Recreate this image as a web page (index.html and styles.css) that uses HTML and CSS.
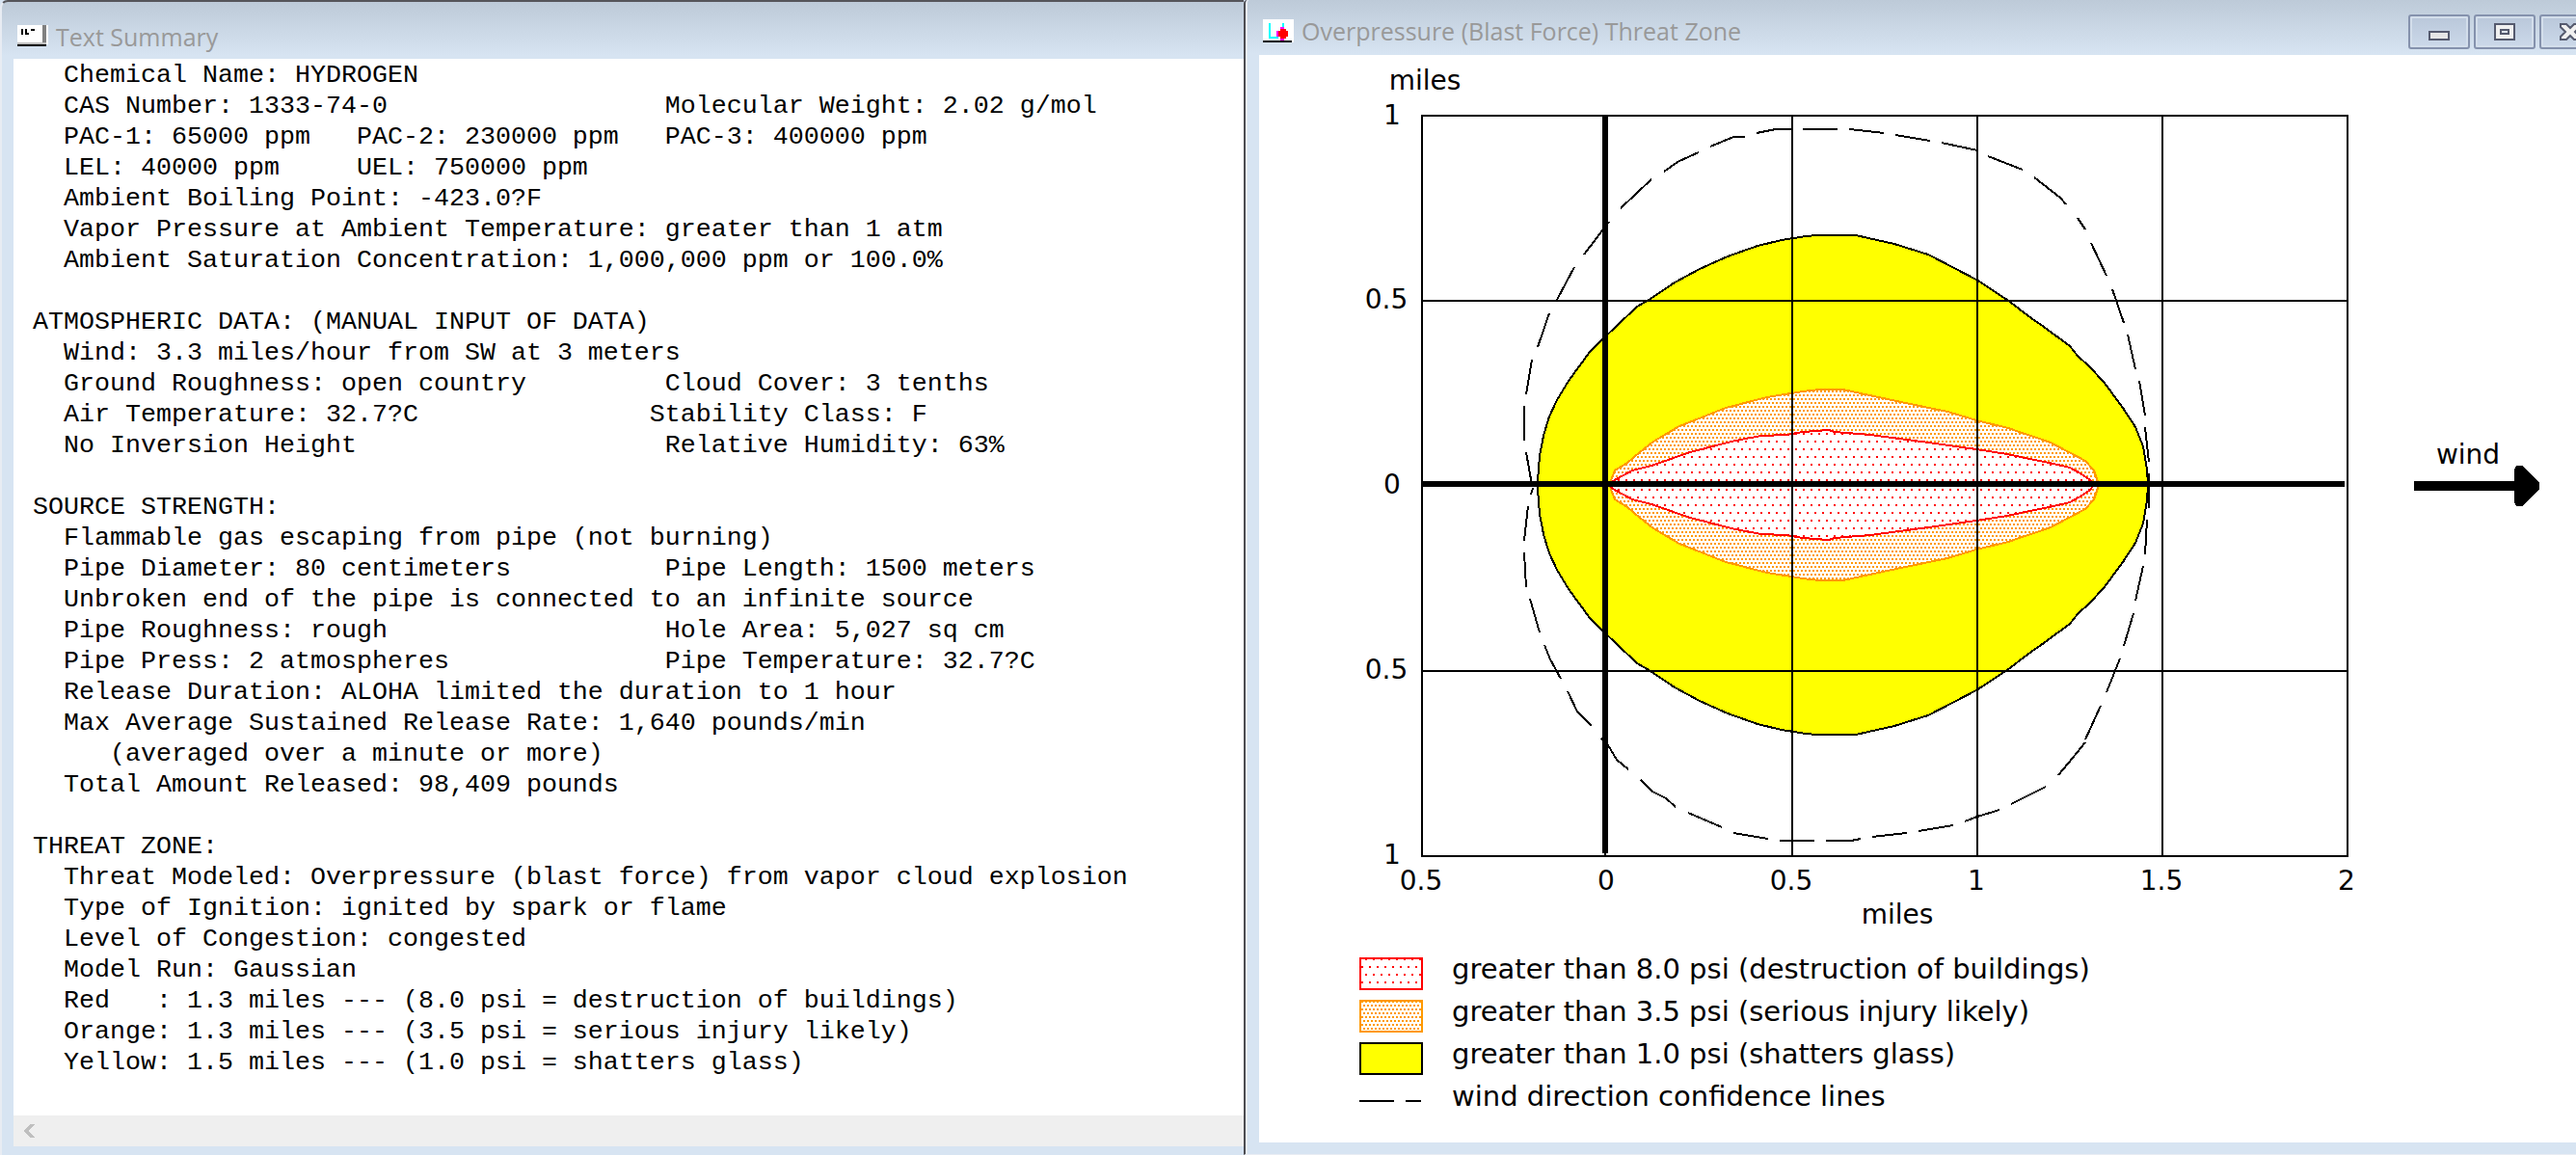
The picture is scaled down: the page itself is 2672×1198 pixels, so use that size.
FILE: index.html
```html
<!DOCTYPE html>
<html lang="en">
<head>
<meta charset="utf-8">
<title>ALOHA</title>
<link rel="stylesheet" href="styles.css">
</head>
<body>
<main class="desktop">
  <section class="window window-text">
    <header class="titlebar">
      <svg class="title-icon" viewBox="0 0 32 24" aria-hidden="true" shape-rendering="crispEdges">
        <path d="M0 0H32V20H0z" fill="#fff"/>
        <path d="M26 0H30V20H26z" fill="#808080"/>
        <path d="M0 18H30V20H0z" fill="#c0c0c0"/>
        <path d="M0 20H30V22H0z" fill="#000"/>
        <path d="M4 4h2v6h-2zM8 4h2v6h-2zM10 8h2v2h-2zM14 4h4v2h-4z" fill="#000"/>
      </svg>
      <h1 class="title">Text Summary</h1>
    </header>
    <div class="client">
<pre class="summary">  Chemical Name: HYDROGEN
  CAS Number: 1333-74-0                  Molecular Weight: 2.02 g/mol
  PAC-1: 65000 ppm   PAC-2: 230000 ppm   PAC-3: 400000 ppm
  LEL: 40000 ppm     UEL: 750000 ppm
  Ambient Boiling Point: -423.0?F
  Vapor Pressure at Ambient Temperature: greater than 1 atm
  Ambient Saturation Concentration: 1,000,000 ppm or 100.0%

ATMOSPHERIC DATA: (MANUAL INPUT OF DATA)
  Wind: 3.3 miles/hour from SW at 3 meters
  Ground Roughness: open country         Cloud Cover: 3 tenths
  Air Temperature: 32.7?C               Stability Class: F
  No Inversion Height                    Relative Humidity: 63%

SOURCE STRENGTH:
  Flammable gas escaping from pipe (not burning)
  Pipe Diameter: 80 centimeters          Pipe Length: 1500 meters
  Unbroken end of the pipe is connected to an infinite source
  Pipe Roughness: rough                  Hole Area: 5,027 sq cm
  Pipe Press: 2 atmospheres              Pipe Temperature: 32.7?C
  Release Duration: ALOHA limited the duration to 1 hour
  Max Average Sustained Release Rate: 1,640 pounds/min
     (averaged over a minute or more)
  Total Amount Released: 98,409 pounds

THREAT ZONE:
  Threat Modeled: Overpressure (blast force) from vapor cloud explosion
  Type of Ignition: ignited by spark or flame
  Level of Congestion: congested
  Model Run: Gaussian
  Red   : 1.3 miles --- (8.0 psi = destruction of buildings)
  Orange: 1.3 miles --- (3.5 psi = serious injury likely)
  Yellow: 1.5 miles --- (1.0 psi = shatters glass)</pre>
      <div class="scrollbar">
        <button class="scroll-left" type="button" aria-label="Scroll left">
          <svg viewBox="0 0 12 14" width="12" height="14" aria-hidden="true"><path d="M12 0H7L0 7l7 7h5L6 7z" fill="#bfbfbf" shape-rendering="crispEdges"/></svg>
        </button>
      </div>
    </div>
  </section>

  <section class="window window-zone">
    <header class="titlebar">
      <svg class="title-icon" viewBox="0 0 32 24" aria-hidden="true" shape-rendering="crispEdges">
        <path d="M0 0H32V24H0z" fill="#fff"/>
        <path d="M0 22H30V24H0z" fill="#000"/>
        <path d="M6 4h2v14h8v2H6zM20 4h2v6h-2z" fill="#0ff"/>
        <path d="M18 8h4v14h-4zM14 12h4v6h-4z" fill="#f0f"/>
        <path d="M18 10h6v2h2v6h-2v2h-6v-2h-2v-6h2z" fill="#f00"/>
      </svg>
      <h1 class="title">Overpressure (Blast Force) Threat Zone</h1>
      <div class="controls">
        <button class="control" type="button" aria-label="Minimize">
          <svg viewBox="0 0 22 18" width="22" height="18" aria-hidden="true"><path d="M1 9h20v8H1z" fill="#e6e6e6" stroke="#555a6e" stroke-width="2"/></svg>
        </button>
        <button class="control" type="button" aria-label="Maximize">
          <svg viewBox="0 0 22 18" width="22" height="18" aria-hidden="true"><path d="M1 1h20v16H1z" fill="#f0f0f0" stroke="#555a6e" stroke-width="2"/><path d="M7 7h8v4H7z" fill="#dde5ef" stroke="#555a6e" stroke-width="2"/></svg>
        </button>
        <button class="control" type="button" aria-label="Close">
          <svg viewBox="0 0 22 18" width="22" height="18" aria-hidden="true"><path d="M1 1h6l4 4 4-4h6v3l-5 5 5 5v3h-6l-4-4-4 4H1v-3l5-5-5-5z" fill="#f0f0f0" stroke="#555a6e" stroke-width="2"/></svg>
        </button>
      </div>
    </header>
    <div class="client">
      <svg class="chart" viewBox="1306 57 1366 920" role="img" aria-label="Overpressure threat zone in miles">
        <defs>
          <pattern id="dots-red" x="1866" y="457" width="8" height="16" patternUnits="userSpaceOnUse">
            <path d="M0 0h8v16H0z" fill="#fff"/><path d="M0 0h2v2H0zM4 8h2v2H4z" fill="#f00"/>
          </pattern>
          <pattern id="dots-orange" x="1866" y="457" width="4" height="8" patternUnits="userSpaceOnUse">
            <path d="M0 0h4v8H0z" fill="#fff"/><path d="M0 0h2v2H0zM2 4h2v2H2z" fill="#ff9900"/>
          </pattern>
          <path id="yellow-half" d="M1595 503L1595 499 1597 473 1601 452 1607 432 1615 415 1627 395 1638 380 1649 365 1662 352 1677 338 1698 318 1712 310 1737 293 1763 279 1792 266 1823 255 1848 249 1873 245 1885 244 1925 244 1938 247 1965 253 2000 264 2027 278 2050 290 2082 311 2107 330 2120 339 2147 359 2155 369 2167 380 2182 396 2202 423 2215 443 2223 463 2227 487 2228 503"/>
          <path id="orange-half" d="M1670 503L1671 498 1675 488 1688 480 1701 469 1715 458 1742 442 1765 433 1790 423 1833 412 1870 406 1887 404 1912 404 1930 408 1967 416 2020 427 2050 436 2083 444 2127 459 2163 478 2172 488 2177 503"/>
          <path id="red-half" d="M1668 503L1673 499 1693 488 1713 483 1753 469 1800 457 1827 452 1853 451 1870 448 1897 446 1903 448 1940 451 1993 458 2050 466 2082 471 2110 477 2126 480 2147 485 2158 491 2168 498 2172 503"/>
        </defs>
        <g shape-rendering="crispEdges" stroke-width="2">
          <g fill="#ff0" stroke="#000">
            <use href="#yellow-half"/><use href="#yellow-half" transform="matrix(1 0 0 -1 0 1006)"/>
          </g>
          <g fill="url(#dots-orange)" stroke="#ff9900">
            <use href="#orange-half"/><use href="#orange-half" transform="matrix(1 0 0 -1 0 1006)"/>
          </g>
          <g fill="url(#dots-red)" stroke="#f00">
            <use href="#red-half"/><use href="#red-half" transform="matrix(1 0 0 -1 0 1006)"/>
          </g>
          <g fill="none" stroke="#000">
            <path d="M1589 373L1583 409M1607 325L1595 360M1633 277L1615 311M1669 230L1643 264M1713 186L1681 216M1762 158L1740 168 1726 178M1810 142H1798L1774 152M1859 134H1842L1822 138M1870 134H1906M1918 134L1954 138M1966 140L2002 146M2014 148L2051 156M2062 162L2098 176M2110 184L2137 205 2143 212M2155 226L2163 238M2169 252L2185 286M2191 300L2203 335M2207 347L2215 383M2219 395L2225 431M2225 443L2229 479M2229 491V527M2227 539L2225 575M2223 587L2215 623"/>
            <path d="M1581 421V457M1583 469L1589 503M1590 506L1588 513M1585 525L1581 561M1581 573L1583 609M1587 621L1597 656M1602 669L1608 684 1619 704M1626 717L1636 738 1651 753M1661 766L1668 773 1677 788 1689 798M1702 809L1714 821 1728 828 1738 837M1751 843L1786 858M1798 864L1834 870M1846 872H1882M1894 872H1920L1930 870M1942 868L1978 864M1990 862L2026 856M2038 852L2051 847 2074 840M2086 834L2122 816M2135 804L2150 786 2163 770M2163 767L2179 732M2185 718L2199 683M2203 670L2213 636"/>
            <path d="M1475 120H2435V888H1475zM1665 120V888M1859 120V888M2051 120V888M2243 120V888M1475 312H2435M1475 696H2435"/>
            <path d="M1665 120V885M1475 502H2432" stroke-width="6"/>
          </g>
          <path d="M2504 499h104v-12l2-4h6l18 18v6l-18 18h-6l-2-4v-12h-104z"/>
        </g>
        <g class="chart-label">
          <text x="1478" y="93">miles</text>
          <text x="1444" y="129">1</text>
          <text x="1438" y="320">0.5</text>
          <text x="1444" y="512">0</text>
          <text x="1438" y="704">0.5</text>
          <text x="1444" y="896">1</text>
          <text x="1474" y="923">0.5</text>
          <text x="1666" y="923">0</text>
          <text x="1858" y="923">0.5</text>
          <text x="2050" y="923">1</text>
          <text x="2242" y="923">1.5</text>
          <text x="2434" y="923">2</text>
          <text x="1968" y="958">miles</text>
          <text x="2560" y="481">wind</text>
        </g>
      </svg>
      <ul class="legend">
        <li class="legend-row"><svg class="swatch" viewBox="0 0 66 34" aria-hidden="true"><path d="M1 1h64v32H1z" fill="url(#dots-red)" stroke="#f00" stroke-width="2"/></svg>greater than 8.0 psi (destruction of buildings)</li>
        <li class="legend-row"><svg class="swatch" viewBox="0 0 66 34" aria-hidden="true"><path d="M1 1h64v32H1z" fill="url(#dots-orange)" stroke="#ff9900" stroke-width="2"/></svg>greater than 3.5 psi (serious injury likely)</li>
        <li class="legend-row"><svg class="swatch" viewBox="0 0 66 34" aria-hidden="true"><path d="M1 1h64v32H1z" fill="#ff0" stroke="#000" stroke-width="2"/></svg>greater than 1.0 psi (shatters glass)</li>
        <li class="legend-row"><svg class="swatch" viewBox="0 0 66 34" aria-hidden="true"><path d="M0 17h36M48 17h16" stroke="#000" stroke-width="2"/></svg>wind direction confidence lines</li>
      </ul>
    </div>
  </section>
</main>
</body>
</html>
```
FILE: styles.css
```css
* {
  box-sizing: border-box;
}

body {
  margin: 0;
  background: #d7e4f2;
  color: #000;
}

.desktop {
  display: grid;
  grid-template-columns: 1290fr 1382fr;
  min-height: 100vh;
  overflow: hidden;
}

.window {
  display: flex;
  flex-direction: column;
  min-width: 0;
  background: linear-gradient(#bdcad8, #d7e4f2 56px);
}

.window-text {
  padding: 0 0 9px 12px;
  border-top: 2px solid #55555a;
  border-left: 2px solid #e8ecf3;
  border-top-left-radius: 8px;
}

.window-zone {
  padding: 0 0 12px 14px;
  border-left: 2px solid #4d4d52;
  border-bottom: 1px solid #e8ecf3;
  border-top-left-radius: 4px;
  box-shadow: inset 2px 0 #e8ecf3;
}

.titlebar {
  display: flex;
  align-items: center;
  gap: 8px;
  flex: none;
}

.window-text .titlebar {
  height: 59px;
  padding: 12px 0 0 4px;
}

.window-zone .titlebar {
  height: 57px;
  padding: 7px 0 0 4px;
}

.title-icon {
  flex: none;
  width: 32px;
  height: 24px;
}

.title {
  margin: 0;
  color: #999;
  font: 25px/32px "Open Sans", "Noto Sans", sans-serif;
  white-space: nowrap;
}

/* The close button runs past the edge of the desktop. */
.controls {
  display: flex;
  gap: 4px;
  margin: 2px -26px 0 auto;
}

.control {
  display: flex;
  align-items: center;
  justify-content: center;
  width: 64px;
  height: 36px;
  padding: 0;
  border: 2px solid #8592ad;
  border-radius: 3px;
  background: linear-gradient(#b9c7da, #ccd9ea);
  box-shadow: inset 0 0 0 2px #d3deeb;
}

.client {
  display: flex;
  flex: 1;
  flex-direction: column;
  background: #fff;
}

.summary {
  flex: 1;
  margin: 0;
  padding: 1px 0 0 20px;
  font: 20pt/32px "Liberation Mono", "Courier New", monospace;
}

.scrollbar {
  display: flex;
  flex: none;
  height: 32px;
  background: #efefef;
}

.scroll-left {
  display: flex;
  align-items: center;
  justify-content: center;
  width: 32px;
  padding: 0;
  border: 0;
  background: none;
}

.chart {
  display: block;
  width: 100%;
  height: auto;
}

.chart-label {
  font: 28px "DejaVu Sans", Verdana, sans-serif;
  text-anchor: middle;
}

.legend {
  margin: 0;
  padding: 6px 0 0 104px;
  list-style: none;
  font: 29px/44px "DejaVu Sans", Verdana, sans-serif;
}

.legend-row {
  display: flex;
  align-items: flex-end;
  gap: 30px;
  height: 44px;
}

.swatch {
  flex: none;
  width: 66px;
  height: 34px;
}
```
